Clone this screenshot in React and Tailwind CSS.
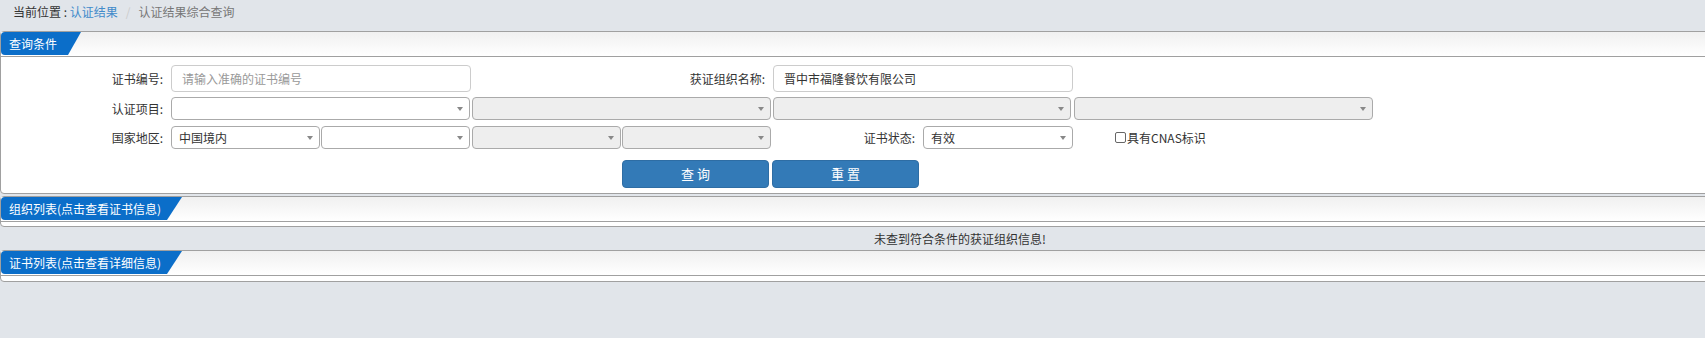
import React from "react"

const font = "font-['Noto_Sans_CJK_SC','Microsoft_YaHei',sans-serif]"

function Arrow() {
  return <span className="mr-[6px] h-0 w-0 border-x-[3.5px] border-t-[4px] border-x-transparent border-t-[#888]" />
}

function Select({ value = "", disabled = false, width = "w-[299px]" }) {
  return (
    <div
      className={`flex h-[23px] items-center justify-between rounded-[4px] border border-[#aaa] ${width} ${
        disabled ? "bg-[#eee]" : "bg-white"
      }`}
    >
      <span className="pl-[7px] leading-[21px] text-[#333]">{value}</span>
      <Arrow />
    </div>
  )
}

function Label({ children, width = "w-[170px]" }) {
  return <div className={`${width} shrink-0 pr-[8px] text-right text-[#333]`}>{children}</div>
}

function Panel({ title, tabWidth, slant, bodyClass, children }) {
  return (
    <div className="rounded-[4px] border border-[#a0a0a0] bg-white">
      <div className="h-[25px] border-b border-[#a0a0a0] bg-gradient-to-b from-[#f0f0f0] to-white">
        <div
          className={`${tabWidth} h-[23px] rounded-l-[4px] bg-[#0b6ec9] pl-[8px] leading-[23px] text-white`}
          style={{ clipPath: `polygon(0 0, 100% 0, calc(100% - ${slant}px) 100%, 0 100%)` }}
        >
          {title}
        </div>
      </div>
      <div className={bodyClass}>{children}</div>
    </div>
  )
}

export default function App() {
  return (
    <div className={`min-h-[338px] w-full overflow-hidden bg-[#e1e5ea] text-[12px] ${font}`}>
      <div className="w-[1920px]">
        {/* breadcrumb */}
        <div className="h-[31px] pl-[13px] pt-[5px] leading-[14px]">
          <span className="text-[#333]">当前位置 : </span>
          <span className="text-[#428bca]">认证结果</span>
          <span className="px-[8px] text-[#ccc]">/</span>
          <span className="text-[#777]">认证结果综合查询</span>
        </div>

        {/* query conditions */}
        <Panel title="查询条件" tabWidth="w-[80px]" slant={13} bodyClass="pt-[8px] pb-[5px]">
          <div className="flex h-[27px] items-center">
            <Label>证书编号:</Label>
            <div className="w-[301px]">
              <input
                type="text"
                placeholder="请输入准确的证书编号"
                className="h-[27px] w-[300px] rounded-[4px] border border-[#ccc] pl-[10px] text-[12px] text-[#333] outline-none placeholder:text-[#999]"
              />
            </div>
            <Label width="w-[301px]">获证组织名称:</Label>
            <input
              type="text"
              defaultValue="晋中市福隆餐饮有限公司"
              className="h-[27px] w-[300px] rounded-[4px] border border-[#ccc] pl-[10px] text-[12px] text-[#333] outline-none"
            />
          </div>

          <div className="mt-[5px] flex items-center">
            <Label>认证项目:</Label>
            <div className="w-[301px]">
              <Select />
            </div>
            <div className="w-[301px]">
              <Select disabled />
            </div>
            <div className="w-[301px]">
              <Select disabled width="w-[298px]" />
            </div>
            <div className="w-[301px]">
              <Select disabled />
            </div>
          </div>

          <div className="mt-[6px] flex items-center">
            <Label>国家地区:</Label>
            <div className="flex w-[301px] gap-[1px]">
              <Select value="中国境内" width="w-[149px]" />
              <Select width="w-[149px]" />
            </div>
            <div className="flex w-[301px] gap-[1px]">
              <Select disabled width="w-[149px]" />
              <Select disabled width="w-[149px]" />
            </div>
            <div className="flex w-[301px] items-center">
              <Label width="w-[150px]">证书状态:</Label>
              <Select value="有效" width="w-[150px]" />
            </div>
            <label className="flex items-center pl-[41px] text-[#333]">
              <input
                type="checkbox"
                className="h-[11px] w-[11px] appearance-none rounded-[2px] border border-[#666] bg-white"
              />
              <span className="ml-[1px]">具有CNAS标识</span>
            </label>
          </div>

          <div className="ml-[621px] mt-[11px] flex gap-[3px]">
            <button className="h-[28px] w-[147px] rounded-[4px] border border-[#2e6da4] bg-[#337ab7] text-[13px] text-white">
              查 询
            </button>
            <button className="h-[28px] w-[147px] rounded-[4px] border border-[#2e6da4] bg-[#337ab7] text-[13px] text-white">
              重 置
            </button>
          </div>
        </Panel>

        <div className="mt-[2px]">
          <Panel title="组织列表(点击查看证书信息)" tabWidth="w-[181px]" slant={15} bodyClass="h-[4px]" />
        </div>

        <div className="h-[23px] text-center leading-[23px] text-[#333]">未查到符合条件的获证组织信息!</div>

        <Panel title="证书列表(点击查看详细信息)" tabWidth="w-[181px]" slant={15} bodyClass="h-[5px]" />
      </div>
    </div>
  )
}
